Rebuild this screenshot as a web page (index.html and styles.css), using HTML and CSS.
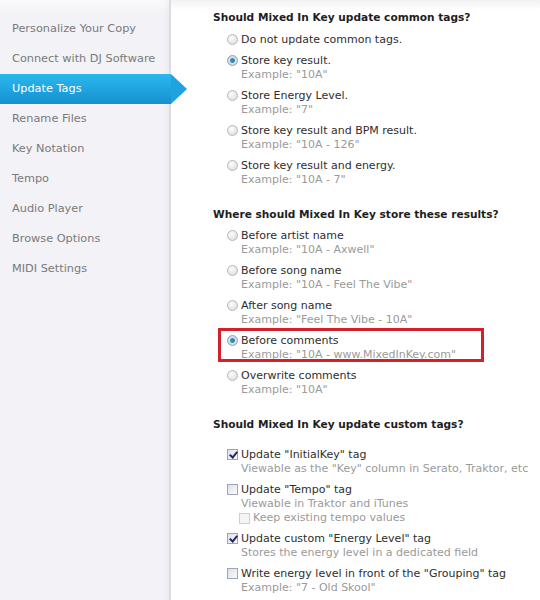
FILE: index.html
```html
<!DOCTYPE html>
<html lang="en">
<head>
    <meta charset="UTF-8">
    <title>Mixed In Key | Preferences</title>
    <link rel="stylesheet" href="styles.css">
</head>
<body>
    <div class="window">
        <ul class="sidebar">
            <li>Personalize Your Copy</li>
            <li>Connect with DJ Software</li>
            <li class="active">Update Tags</li>
            <li>Rename Files</li>
            <li>Key Notation</li>
            <li>Tempo</li>
            <li>Audio Player</li>
            <li>Browse Options</li>
            <li>MIDI Settings</li>
        </ul>

        <div class="panel">
            <h2>Should Mixed In Key update common tags?</h2>
            <div class="options">
                <div class="opt"><span class="radio"></span><div><div class="label">Do not update common tags.</div></div></div>
                <div class="opt"><span class="radio on"></span><div><div class="label">Store key result.</div><div class="hint">Example: "10A"</div></div></div>
                <div class="opt"><span class="radio"></span><div><div class="label">Store Energy Level.</div><div class="hint">Example: "7"</div></div></div>
                <div class="opt"><span class="radio"></span><div><div class="label">Store key result and BPM result.</div><div class="hint">Example: "10A - 126"</div></div></div>
                <div class="opt"><span class="radio"></span><div><div class="label">Store key result and energy.</div><div class="hint">Example: "10A - 7"</div></div></div>
            </div>

            <h2 class="where">Where should Mixed In Key store these results?</h2>
            <div class="options">
                <div class="opt"><span class="radio"></span><div><div class="label">Before artist name</div><div class="hint">Example: "10A - Axwell"</div></div></div>
                <div class="opt"><span class="radio"></span><div><div class="label">Before song name</div><div class="hint">Example: "10A - Feel The Vibe"</div></div></div>
                <div class="opt"><span class="radio"></span><div><div class="label">After song name</div><div class="hint">Example: "Feel The Vibe - 10A"</div></div></div>
                <div class="opt highlight"><span class="radio on"></span><div><div class="label">Before comments</div><div class="hint">Example: "10A - www.MixedInKey.com"</div></div></div>
                <div class="opt"><span class="radio"></span><div><div class="label">Overwrite comments</div><div class="hint">Example: "10A"</div></div></div>
            </div>

            <h2 class="custom">Should Mixed In Key update custom tags?</h2>
            <div class="options checks">
                <div class="opt"><span class="check on"></span><div><div class="label">Update "InitialKey" tag</div><div class="hint">Viewable as the "Key" column in Serato, Traktor, etc</div></div></div>
                <div class="opt"><span class="check"></span><div><div class="label">Update "Tempo" tag</div><div class="hint">Viewable in Traktor and iTunes</div>
                    <div class="sub"><span class="check off"></span><span class="hint">Keep existing tempo values</span></div></div></div>
                <div class="opt"><span class="check on"></span><div><div class="label">Update custom "Energy Level" tag</div><div class="hint">Stores the energy level in a dedicated field</div></div></div>
                <div class="opt"><span class="check"></span><div><div class="label">Write energy level in front of the "Grouping" tag</div><div class="hint">Example: "7 - Old Skool"</div></div></div>
            </div>
        </div>
    </div>
</body>
</html>
```

FILE: styles.css
```css
html, body {
    margin: 0;
    height: 100%;
}
body {
    font-family: 'DejaVu Sans', Verdana, sans-serif;
    font-size: 11px;
    background: #fff;
    overflow: hidden;
}
.window {
    display: flex;
    height: 600px;
}

/* left menu */
.sidebar {
    list-style: none;
    margin: 0;
    padding: 14px 0 0 0;
    width: 169px;
    flex: none;
    font-size: 11.3px;
    background: linear-gradient(to bottom, #fafafc 0, #f2f2f7 14px, #f2f2f7 100%);
    border-right: 2px solid #dcdce0;
    box-shadow: inset -6px 0 8px -6px rgba(0, 0, 0, 0.06);
}
.sidebar li {
    height: 30px;
    line-height: 30px;
    padding-left: 12px;
    color: #7a7a7a;
    position: relative;
}
.sidebar li.active {
    color: #fff;
    background: linear-gradient(to bottom, #2bb8ee, #1590d0);
    margin-right: -2px;
}
.sidebar li.active::after {
    content: "";
    position: absolute;
    top: 0;
    right: -16px;
    border-top: 15px solid transparent;
    border-bottom: 15px solid transparent;
    border-left: 16px solid #1fa3df;
}

/* right panel */
.panel {
    flex: 1;
    padding: 9px 0 0 42px;
    background: linear-gradient(to bottom, #f2f2f2 0, #fff 10px);
    color: #2b2b2b;
}
.panel h2 {
    font-size: 10.6px;
    font-weight: bold;
    color: #1e1e1e;
    margin: 0 0 8px 0;
    line-height: 16px;
}
.panel h2.where {
    margin-bottom: 7px;
}
.panel h2.custom {
    margin-bottom: 16px;
}
.options {
    display: flex;
    flex-direction: column;
    align-items: flex-start;
    gap: 7px;
    padding-left: 14px;
    margin-bottom: 19px;
}
.opt {
    display: flex;
    align-items: flex-start;
    gap: 3px;
}
.label {
    line-height: 14px;
    color: #2e2e2e;
}
.hint {
    line-height: 14px;
    color: #9a9a9a;
}
.opt.highlight {
    position: relative;
}
.opt.highlight::before {
    content: "";
    position: absolute;
    left: -9px;
    top: -6px;
    width: 266px;
    height: 34px;
    border: 3px solid #d4202b;
    box-sizing: border-box;
}

.radio {
    width: 11px;
    height: 11px;
    margin-top: 1px;
    border-radius: 50%;
    flex: none;
    border: 1px solid #b8b8b8;
    box-sizing: border-box;
    background: radial-gradient(circle at 40% 35%, #fdfdfd, #d6d6d6);
}
.radio.on {
    border-color: #8aa4b8;
    background: radial-gradient(circle, #2a7fa8 0, #3c8fb8 2px, #dde6ec 3px, #c8d2d8 5px);
}

.check {
    width: 11px;
    height: 11px;
    margin-top: 1px;
    flex: none;
    border: 1px solid #9ca6b8;
    box-sizing: border-box;
    background: linear-gradient(135deg, #dfe1e6, #fbfbfc);
    position: relative;
}
.check.on::after {
    content: "";
    position: absolute;
    left: 3px;
    top: 0;
    width: 3px;
    height: 6px;
    border-right: 2px solid #1c2a6a;
    border-bottom: 2px solid #1c2a6a;
    transform: rotate(40deg);
}
.check.off {
    border-color: #cfcfcf;
    background: #f4f4f4;
}
.sub {
    display: flex;
    gap: 3px;
    align-items: center;
    margin-left: -2px;
}
.sub .check {
    margin-top: 0;
}
```
